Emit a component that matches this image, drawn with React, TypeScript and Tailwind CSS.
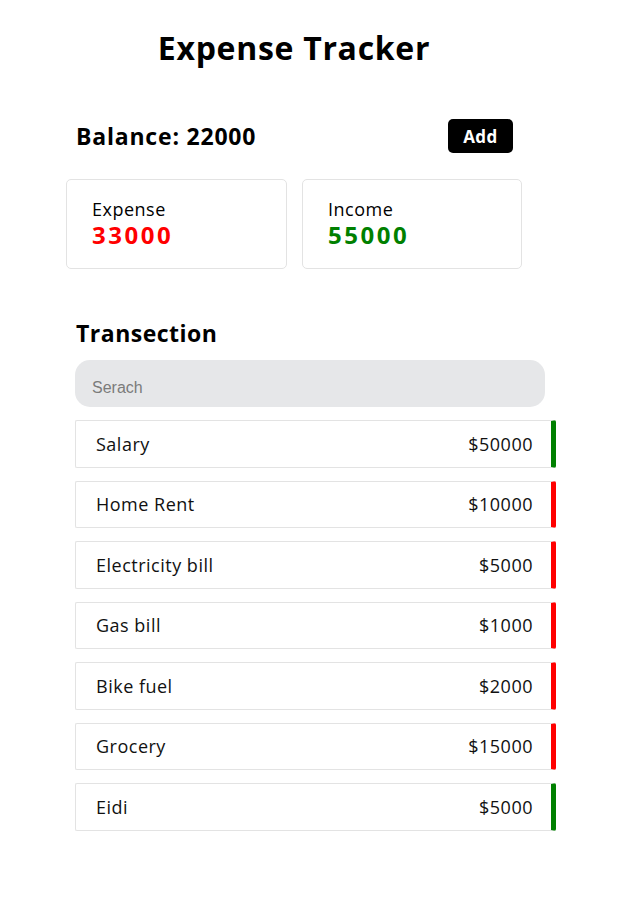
import React from "react";

type Tx = { name: string; amount: number; type: "income" | "expense" };

const txs: Tx[] = [
  { name: "Salary", amount: 50000, type: "income" },
  { name: "Home Rent", amount: 10000, type: "expense" },
  { name: "Electricity bill", amount: 5000, type: "expense" },
  { name: "Gas bill", amount: 1000, type: "expense" },
  { name: "Bike fuel", amount: 2000, type: "expense" },
  { name: "Grocery", amount: 15000, type: "expense" },
  { name: "Eidi", amount: 5000, type: "income" },
];

export default function App() {
  return (
    <div className="min-h-screen bg-white font-['Open_Sans',sans-serif] text-black">
      <div className="ml-[66px] w-[456px] pt-[32px]">
        <h1 className="text-center text-[32px] leading-[32px] font-bold tracking-[0.7px]">
          Expense Tracker
        </h1>

        <div className="mt-[55px] flex h-[34px] items-center justify-between pl-[10px] pr-[9px]">
          <h2 className="text-[23px] leading-[23px] font-bold tracking-[0.8px]">
            Balance: 22000
          </h2>
          <button className="flex h-[34px] w-[65px] items-center justify-center rounded-[5px] bg-black text-[17px] leading-[17px] font-bold tracking-[0.5px] text-white">
            Add
          </button>
        </div>

        <div className="mt-[26px] flex gap-[15px]">
          <div className="h-[90px] w-[221px] rounded-[5px] border border-[#e3e3e3] pl-[25px] pt-[20px]">
            <div className="text-[18px] leading-[18px] tracking-[0.5px]">Expense</div>
            <div className="mt-[5px] text-[24px] leading-[24px] font-bold tracking-[2.5px] text-[#ff0000]">
              33000
            </div>
          </div>
          <div className="h-[90px] w-[220px] rounded-[5px] border border-[#e3e3e3] pl-[25px] pt-[20px]">
            <div className="text-[18px] leading-[18px] tracking-[0.5px]">Income</div>
            <div className="mt-[5px] text-[24px] leading-[24px] font-bold tracking-[2.5px] text-[#008000]">
              55000
            </div>
          </div>
        </div>

        <div className="ml-[9px] mt-[53px]">
          <h2 className="pl-[1px] text-[23px] leading-[23px] font-bold tracking-[0.5px]">
            Transection
          </h2>
          <input
            placeholder="Serach"
            className="mt-[15px] box-border h-[47px] w-[470px] rounded-[15px] bg-[#e6e7e9] pl-[17px] pt-[8px] font-['Liberation_Sans',Arial,sans-serif] text-[16px] outline-none placeholder:text-[#7b7b7b]"
          />
          <div className="mt-[13px] flex flex-col gap-[13px]">
            {txs.map((t) => (
              <div
                key={t.name}
                className={
                  "box-border flex h-[47.5px] w-[481px] items-center justify-between rounded-[2px] border border-[#e3e3e3] border-r-[5px] pl-[20px] pr-[18px] text-[18px] leading-[18px] tracking-[0.5px] text-[#111] " +
                  (t.type === "income" ? "border-r-[#008000]" : "border-r-[#ff0000]")
                }
              >
                <span>{t.name}</span>
                <span>${t.amount}</span>
              </div>
            ))}
          </div>
        </div>
      </div>
    </div>
  );
}
